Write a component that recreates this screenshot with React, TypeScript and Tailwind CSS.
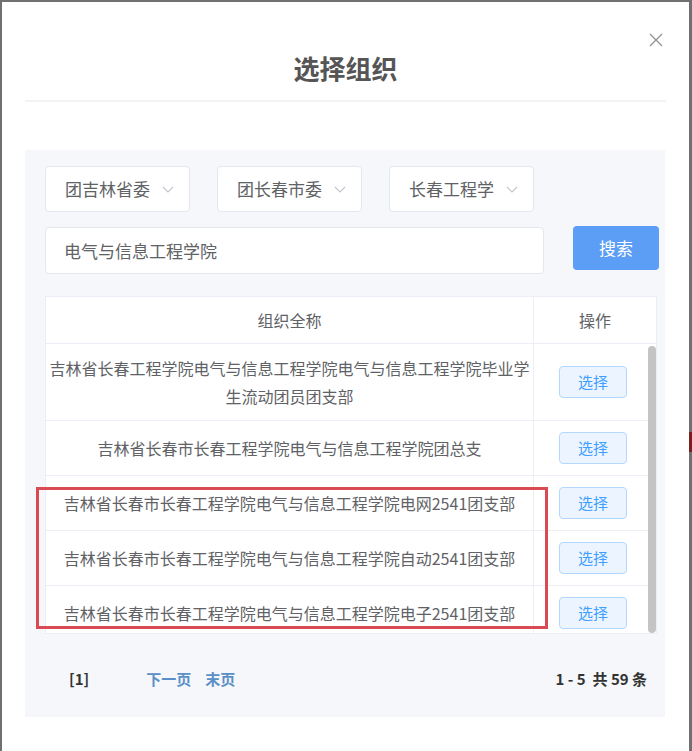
import React from 'react';

const rows = [
  '吉林省长春工程学院电气与信息工程学院电气与信息工程学院毕业学生流动团员团支部',
  '吉林省长春市长春工程学院电气与信息工程学院团总支',
  '吉林省长春市长春工程学院电气与信息工程学院电网2541团支部',
  '吉林省长春市长春工程学院电气与信息工程学院自动2541团支部',
  '吉林省长春市长春工程学院电气与信息工程学院电子2541团支部',
];

const selects = ['团吉林省委', '团长春市委', '长春工程学院'];

const Chevron = () => (
  <svg width="12" height="12" viewBox="0 0 12 12" fill="none" stroke="#c0c4cc" strokeWidth="1.1" className="ml-[12px] shrink-0">
    <path d="M1 4l5 5 5-5" />
  </svg>
);

const App: React.FC = () => {
  return (
    <div
      className="relative w-[692px] h-[751px] overflow-hidden bg-[#707070]"
      style={{ fontFamily: '"Noto Sans CJK SC", "Noto Sans", sans-serif' }}
    >
      {/* page behind the modal, peeking at the right edge */}
      <div className="absolute right-0 top-[432px] w-[3px] h-[20px] bg-[#7a1f1f]" />

      <div className="relative ml-[2px] mt-[2px] w-[687px] h-[749px] bg-white">
        <button className="absolute left-[646px] top-[30px] w-[16px] h-[16px] flex items-center justify-center">
          <svg width="14" height="14" viewBox="0 0 14 14" stroke="#909399" strokeWidth="1.3">
            <path d="M1 1l12 12M13 1L1 13" />
          </svg>
        </button>

        <div className="pt-[48px] h-[98px] text-center text-[26px] font-bold text-[#555] leading-[36px]">
          选择组织
        </div>
        <div className="mx-[23px] h-[2px] bg-[#f2f3f5]" />

        <div className="mx-[23px] mt-[48px] w-[640px] h-[567px] bg-[#f5f7fa] pl-[20px] pr-[6px] pt-[16px]">
          <div className="flex gap-[27px]">
            {selects.map((s) => (
              <div
                key={s}
                className="w-[145px] h-[46px] bg-white border border-[#e4e7ed] rounded-[4px] flex items-center pl-[19px] pr-[15px]"
              >
                <span className="flex-1 min-w-0 overflow-hidden whitespace-nowrap text-[17px] text-[#606266]">{s}</span>
                <Chevron />
              </div>
            ))}
          </div>

          <div className="flex items-start mt-[15px]">
            <div className="w-[499px] h-[47px] bg-white border border-[#e4e7ed] rounded-[4px] flex items-center pl-[18px] text-[17px] text-[#606266]">
              电气与信息工程学院
            </div>
            <button className="ml-[29px] -mt-[1px] w-[86px] h-[44px] rounded-[4px] bg-[#5c9df5] text-white text-[17px]">
              搜索
            </button>
          </div>

          <div className="mt-[22px] w-[612px] bg-white border border-[#ebeef5]">
            <div className="flex h-[47px] border-b border-[#ebeef5] text-[16px] text-[#606266]">
              <div className="w-[488px] flex items-center justify-center border-r border-[#ebeef5]">组织全称</div>
              <div className="flex-1 flex items-center justify-center">操作</div>
            </div>
            <div className="relative h-[289px] overflow-hidden">
              {rows.map((r, i) => (
                <div
                  key={i}
                  className={`flex border-b border-[#ebeef5] text-[16px] text-[#606266] ${
                    i === 0 ? 'h-[77px]' : 'h-[55px]'
                  }`}
                >
                  <div className="w-[488px] flex items-center justify-center text-center border-r border-[#ebeef5] leading-[28px]">
                    {r}
                  </div>
                  <div className="flex-1 flex items-center justify-center pr-[4px]">
                    <button className="w-[68px] h-[32px] rounded-[4px] bg-[#ecf5ff] border border-[#b3d8ff] text-[#409eff] text-[15px]">
                      选择
                    </button>
                  </div>
                </div>
              ))}
              <div className="absolute right-0 top-[2px] bottom-[0px] w-[8px] rounded-[4px] bg-[#c4c4c4]" />
            </div>
          </div>

          <div className="flex items-center mt-[34px] pl-[24px] pr-[12px] text-[15px] font-bold">
            <span className="text-[#333]">[1]</span>
            <span className="ml-[57px] text-[#5b8fc7]">下一页</span>
            <span className="ml-[14px] text-[#5b8fc7]">末页</span>
            <span className="ml-auto text-[#333]">1 - 5&nbsp; 共 59 条</span>
          </div>
        </div>
      </div>

      {/* highlight annotation */}
      <div className="absolute left-[36px] top-[487px] w-[512px] h-[142px] border-[3px] border-[#d94a52]" />
    </div>
  );
};

export default App;
